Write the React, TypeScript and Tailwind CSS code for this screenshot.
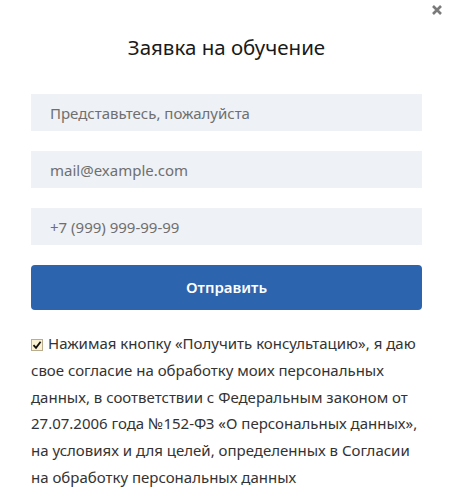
import React from "react";

export default function App() {
  return (
    <div className="relative w-[450px] h-[496px] bg-white overflow-hidden" style={{ fontFamily: '"Noto Sans", "Open Sans", sans-serif' }}>
      <button className="absolute right-[6px] top-[3px] w-[14px] h-[14px] flex items-center justify-center" aria-label="close">
        <svg width="12" height="12" viewBox="0 0 12 12">
          <path d="M2 2 L10 10 M10 2 L2 10" stroke="#7a7a7a" strokeWidth="2.6" strokeLinecap="butt" />
        </svg>
      </button>
      <div className="pl-[31px] pr-[28px] pt-[33px]">
        <h1 className="text-center text-[20.5px] leading-[28px] text-[#1a1a1a] font-normal">Заявка на обучение</h1>
        <div className="mt-[33px] flex flex-col gap-[20px]">
          <input className="h-[37px] w-full bg-[#eef1f5] px-[19px] text-[15px] text-[#333] placeholder:text-[#6f6f6f] outline-none" placeholder="Представьтесь, пожалуйста" />
          <input className="h-[37px] w-full bg-[#eef1f5] px-[19px] text-[15px] text-[#333] placeholder:text-[#6f6f6f] outline-none" placeholder="mail@example.com" />
          <input className="h-[37px] w-full bg-[#eef1f5] px-[19px] text-[15px] text-[#333] placeholder:text-[#6f6f6f] outline-none" placeholder="+7 (999) 999-99-99" />
          <button className="h-[45px] w-full rounded-[4px] bg-[#2c64ae] text-white text-[15px] font-semibold">Отправить</button>
        </div>
        <p className="mt-[20px] text-[15px] leading-[26.8px] text-[#333]">
          <span className="inline-flex align-[-1px] mr-[5px] w-[12px] h-[12px] border border-[#b9ad8e] bg-[#fbf1d3] items-center justify-center">
            <svg width="10" height="10" viewBox="0 0 10 10">
              <path d="M1.5 5.2 L4 7.8 L8.6 1.8" fill="none" stroke="#111" strokeWidth="1.8" />
            </svg>
          </span>
          Нажимая кнопку «Получить консультацию», я даю свое согласие на обработку моих персональных данных, в соответствии с Федеральным законом от 27.07.2006 года №152-ФЗ «О персональных данных», на условиях и для целей, определенных в Согласии на обработку персональных данных
        </p>
      </div>
    </div>
  );
}
